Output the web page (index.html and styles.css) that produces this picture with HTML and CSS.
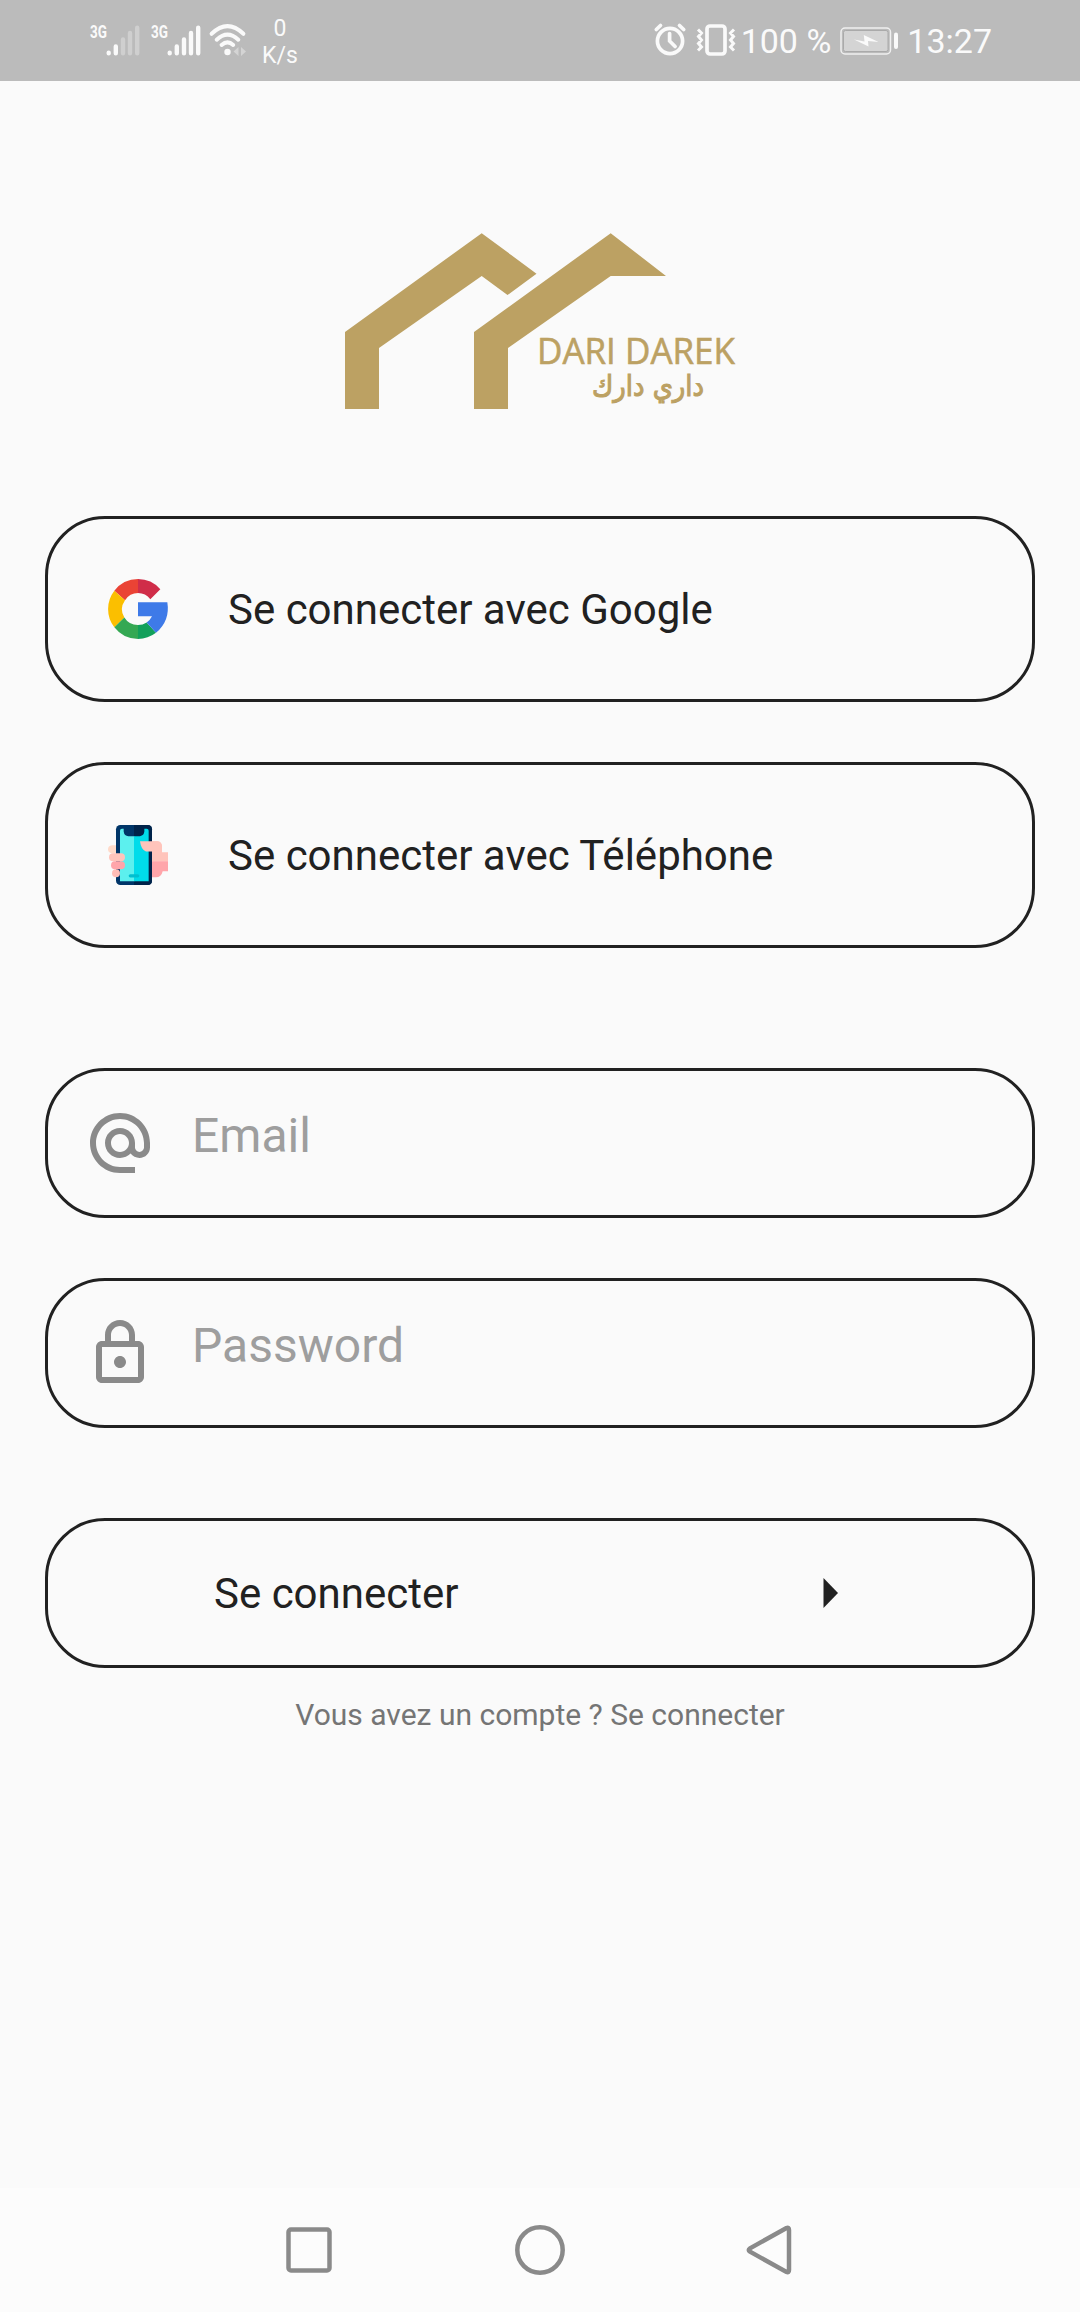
FILE: index.html
```html
<!DOCTYPE html>
<html lang="fr">
<head>
<meta charset="utf-8">
<title>Dari Darek</title>
<link rel="stylesheet" href="styles.css">
</head>
<body>
<div class="screen">
  <header class="status">
    <div class="status-left">
      <svg class="signal" width="52" height="40" viewBox="0 0 52 40">
        <text class="net" x="0" y="18" textLength="17" lengthAdjust="spacingAndGlyphs">3G</text>
        <g class="bar"><path d="M18.7 32.8v.4M25.8 26.4v6.8"/></g>
        <g class="bar dim"><path d="M33 19.5v13.7M40 13v20.2M47.2 7.8v25.4"/></g>
      </svg>
      <svg class="signal" width="52" height="40" viewBox="0 0 52 40">
        <text class="net" x="0" y="18" textLength="17" lengthAdjust="spacingAndGlyphs">3G</text>
        <g class="bar"><path d="M18.7 32.8v.4M25.8 26.4v6.8M33 19.5v13.7M40 13v20.2M47.2 7.8v25.4"/></g>
      </svg>
      <svg class="wifi" width="38" height="40" viewBox="0 0 38 40">
        <g class="arc"><path d="M2.6 13.8Q18.5 -1.5 34.4 13.8M7.7 19.7Q18.5 9.7 29.3 19.7M12.6 25Q18.5 19.8 24.2 25"/></g>
        <circle cx="18.5" cy="32" r="3.2"/>
        <path class="faint" d="M29.5 27v9l-5-4.500zM32 27v9l5-4.500z"/>
      </svg>
      <div class="rate"><span>0</span><span>K/s</span></div>
    </div>
    <div class="status-right">
      <svg class="alarm" width="32" height="34" viewBox="0 0 32 34">
        <circle cx="16" cy="19" r="12.600"/>
        <path d="M15.600 11.500v7.500l5.500 5.500M2.300 7.500L6.500 3.500M29.700 7.500L25.500 3.500"/>
      </svg>
      <svg class="vibrate" width="40" height="34" viewBox="0 0 40 34">
        <rect x="11" y="3" width="18" height="28" rx="3"/>
        <path d="M2 6.500l3.500 3.500-3 3.500 3 3.500-3 3.500 3 3.500-3.500 3.500M38 6.500l-3.500 3.500 3 3.500-3 3.500 3 3.500-3 3.500 3.500 3.500"/>
      </svg>
      <span class="percent">100 %</span>
      <svg class="battery" width="60" height="28" viewBox="0 0 60 28">
        <rect class="shell" x="1" y="1" width="49.500" height="26" rx="4"/>
        <rect class="level" x="3.500" y="3.500" width="44.500" height="21" rx="2"/>
        <path class="bolt" d="M14 12.500l10.500 2-.7-6.500L38.500 15l-10.500-1 .5 5.500z"/>
        <rect class="bolt" x="54" y="5.500" width="4" height="16.500" rx="2"/>
      </svg>
      <span class="clock">13:27</span>
    </div>
  </header>

  <main class="content">
    <svg class="logo" width="400" height="178" viewBox="345 232 400 178">
      <path d="M345 332L481.700 233.200 536.500 273.700 507.500 295 481.700 276 379 348V409H345Z"/>
      <path d="M474 332L610.700 233.200 666 276H610.700L508 348V409H474Z"/>
      <text class="brand" x="537" y="364.200" textLength="198" lengthAdjust="spacingAndGlyphs">DARI DAREK</text>
      <text class="brand-ar" x="592" y="396" textLength="112" lengthAdjust="spacingAndGlyphs">داري دارك</text>
    </svg>

    <div class="card provider">
      <svg width="60" height="60" viewBox="84 56.500 180 180">
        <path fill="#ea4335" d="M174.500 56.500A90 90 0 0 0 103 91.500L135 120A48 48 0 0 1 174.500 98.500Z"/>
        <path fill="#d02d49" d="M174 56.500A90 90 0 0 1 241 87L211 117A48 48 0 0 0 174 98.500Z"/>
        <path fill="#fbbf00" d="M103 91.500A90 90 0 0 0 103 201.500L133 172A48 48 0 0 1 135 120Z"/>
        <path fill="#34a853" d="M103 201.500A90 90 0 0 0 174.500 236.500V194.500A48 48 0 0 1 133 172Z"/>
        <path fill="#12a05b" d="M174 236.500A90 90 0 0 0 228 218L200 187A48 48 0 0 1 174 194.500Z"/>
        <path fill="#3e7ae8" d="M174 126H262Q271 181 228 218L200 187Q210 180 216 168H174Z"/>
      </svg>
      <span>Se connecter avec Google</span>
    </div>

    <div class="card provider">
      <svg width="60" height="60" viewBox="54 44.500 180 180">
        <path fill="#ffc4bb" d="M150 93H203Q216 95 216 110V126H234V154H180V124H168Q153 118 150 93Z"/>
        <path fill="#ffa5aa" d="M180 153H234V183H218Q214 201 198 201H180Z"/>
        <rect fill="#003568" x="78" y="44.500" width="108" height="180" rx="13"/>
        <path fill="#00234a" d="M132 44.500H173Q186 44.500 186 57.500V211.500Q186 224.500 173 224.500H132Z"/>
        <path fill="#5cf0ee" d="M90 62Q90 56 96 56H101V64Q103 78 115 78H133V213H90Z"/>
        <path fill="#00dcea" d="M132 78H150Q162 76 163 64V56H170Q176 56 176 62V213H132Z"/>
        <rect fill="#00bfd0" x="116" y="192" width="32" height="10" rx="5"/>
        <path fill="#ffc4bb" d="M150 93H203Q216 95 216 110V126H190V153H186V124H168Q153 118 150 93Z"/>
        <path fill="#ffdac9" d="M78 105H66Q54 107 54 117T66 129H78Z"/>
        <rect fill="#ffc4bb" x="57" y="129" width="48" height="24" rx="12"/>
        <rect fill="#ffa5aa" x="63" y="153" width="42" height="24" rx="12"/>
        <rect fill="#ffbdb6" x="66" y="177" width="24" height="24" rx="12"/>
      </svg>
      <span>Se connecter avec Téléphone</span>
    </div>

    <div class="card field first">
      <svg width="72" height="72" viewBox="0 0 24 24"><path d="M12 2C6.480 2 2 6.480 2 12s4.480 10 10 10h5v-2h-5c-4.340 0-8-3.660-8-8s3.660-8 8-8 8 3.660 8 8v1.430c0 .790-.710 1.570-1.500 1.570s-1.500-.780-1.500-1.570V12c0-2.760-2.240-5-5-5s-5 2.240-5 5 2.240 5 5 5c1.380 0 2.640-.560 3.540-1.470.650.890 1.770 1.470 2.960 1.470 1.970 0 3.500-1.600 3.500-3.570V12c0-5.520-4.480-10-10-10zm0 13c-1.660 0-3-1.340-3-3s1.340-3 3-3 3 1.340 3 3-1.340 3-3 3z"/></svg>
      <span>Email</span>
    </div>
    <div class="card field">
      <svg width="72" height="72" viewBox="0 0 24 24"><path d="M12 17c1.100 0 2-.900 2-2s-.900-2-2-2-2 .900-2 2 .900 2 2 2zm6-9h-1V6c0-2.760-2.240-5-5-5S7 3.240 7 6v2H6c-1.100 0-2 .900-2 2v10c0 1.100.900 2 2 2h12c1.100 0 2-.900 2-2V10c0-1.100-.900-2-2-2zM9 6c0-1.660 1.340-3 3-3s3 1.340 3 3v2H9V6zm9 14H6V10h12v10z"/></svg>
      <span>Password</span>
    </div>

    <div class="card submit">
      <span>Se connecter</span>
      <svg width="16" height="30" viewBox="0 0 16 30"><path d="M.5 0L15 15 .5 30z"/></svg>
    </div>
    <p class="hint">Vous avez un compte ? Se connecter</p>
  </main>

  <nav class="nav">
    <svg width="50" height="50" viewBox="0 0 50 50"><rect x="4.500" y="4.500" width="41" height="41" rx="2.500"/></svg>
    <svg width="50" height="50" viewBox="0 0 50 50"><circle cx="25" cy="25" r="22.700"/></svg>
    <svg width="50" height="50" viewBox="1.500 0 50 50"><path d="M42 3L5.500 23.300Q3 25 5.500 26.700L42 47Q44.500 48 44.500 45V5Q44.500 2 42 3Z"/></svg>
  </nav>
</div>
</body>
</html>
```
FILE: styles.css
```css
* { box-sizing: border-box; }
body { margin: 0; font-family: Roboto, sans-serif; background: #fafafa; color: #212121; }
svg { display: block; flex: none; overflow: visible; }
.screen { width: 1080px; height: 2312px; display: flex; flex-direction: column; }

.status { height: 81px; background: #bbb; color: #fafafa; display: flex; justify-content: space-between; padding: 0 88px 0 90px; }
.status-left, .status-right { display: flex; }
.status-left { padding-top: 20px; }
.signal { margin-right: 9px; }
.net { font: 700 18px Roboto, sans-serif; fill: #fafafa; }
.bar { fill: none; stroke: #fafafa; stroke-width: 4.400px; stroke-linecap: round; }
.dim { stroke: #cfcfcf; }
.wifi { fill: #fafafa; margin-left: -3px; }
.arc { fill: none; stroke: #fafafa; stroke-width: 4px; stroke-linecap: round; }
.faint { fill: #d4d4d4; }
.rate { display: flex; flex-direction: column; align-items: center; font-size: 23px; line-height: 27px; margin: -5px 0 0 15px; }
.status-right { align-items: center; font-size: 34px; }
.alarm, .vibrate { fill: none; stroke: #fafafa; stroke-width: 3.700px; }
.alarm { stroke-linecap: round; margin-top: -3px; }
.vibrate { margin: -1px 5px 0 10px; }
.vibrate path { stroke-width: 3px; }
.percent { margin-right: 9px; }
.shell { fill: none; stroke: #f0f0f0; stroke-width: 1.500px; }
.level { fill: #d4d4d4; stroke: #aaa; stroke-width: 1px; }
.bolt { fill: #fafafa; }
.clock { margin-left: 7px; }

.content { flex: 1; display: flex; flex-direction: column; padding: 151px 45px 0; }
.logo { margin: 0 0 106px 300px; fill: #bca163; }
.brand { font: 400 37px "Open Sans", sans-serif; stroke: #bca163; stroke-width: 0.600px; }
.brand-ar { font: 400 29px "DejaVu Sans", sans-serif; stroke: #bca163; stroke-width: 1.100px; }

.card { border: 3px solid #212121; border-radius: 60px; display: flex; align-items: center; font-size: 42px; }
.provider { height: 186px; padding-left: 60px; gap: 60px; margin-bottom: 60px; }
.field { height: 150px; padding-left: 36px; gap: 36px; font-size: 48px; color: #9e9e9e; margin-bottom: 60px; }
.field.first { margin-top: 60px; }
.field svg { fill: #8a8a8a; }
.field span { padding-bottom: 15px; }
.submit { height: 150px; margin-top: 30px; padding: 0 193px 0 166px; justify-content: space-between; }
.submit svg { fill: #212121; }
.hint { margin: 29px 0 0; text-align: center; font-size: 30px; line-height: 36px; color: #757575; }

.nav { height: 124px; background: #fcfcfc; display: flex; justify-content: center; align-items: center; gap: 181px; }
.nav svg { fill: none; stroke: #8a8a8a; stroke-width: 4.500px; }
```
